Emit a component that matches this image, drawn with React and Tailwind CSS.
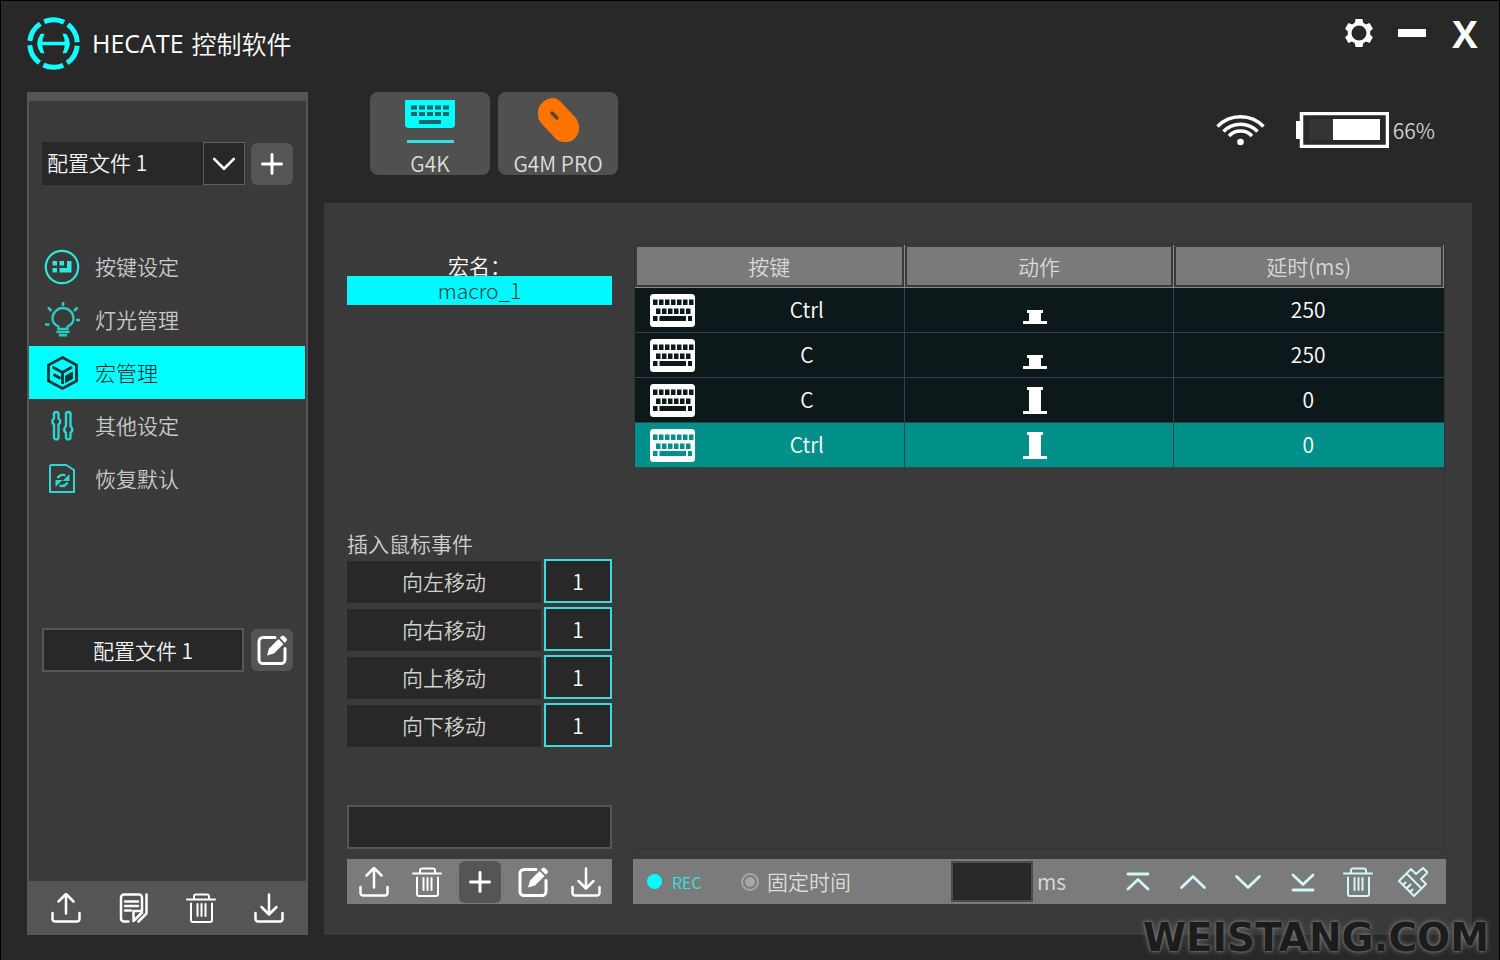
import React, { useState } from 'react';

const Icon = ({ size = 30, width = 2.5, className = '', children }) => (
    <svg
        width={size}
        height={size}
        viewBox="0 0 30 30"
        fill="none"
        stroke="currentColor"
        strokeWidth={width}
        strokeLinecap="round"
        strokeLinejoin="round"
        className={className}
        aria-hidden="true"
    >
        {children}
    </svg>
);

const UploadIcon = () => (
    <Icon>
        <path d="M1.5 20v6a2.5 2.5 0 0 0 2.5 2.5h22a2.5 2.5 0 0 0 2.5-2.5v-6M15 20.5V1.5M7.5 8.5 15 1l7.5 7.5" />
    </Icon>
);

const DownloadIcon = () => (
    <Icon>
        <path d="M1.5 20v6a2.5 2.5 0 0 0 2.5 2.5h22a2.5 2.5 0 0 0 2.5-2.5v-6M15 1.5V21M7.5 14 15 21.5 22.5 14" />
    </Icon>
);

const TrashIcon = () => (
    <Icon width={2}>
        <path d="M1 6.5h28M8 6V3.5A2 2 0 0 1 10 1.5h11a2 2 0 0 1 2 2V6M5 10.5V27a2 2 0 0 0 2 2h17a2 2 0 0 0 2-2V10.5M11.5 11v12M15.5 11v12M19.5 11v12" />
    </Icon>
);

const EditIcon = () => (
    <Icon width={3}>
        <path d="M18 2.5H6A4 4 0 0 0 2 6.5v18a4 4 0 0 0 4 4h18a4 4 0 0 0 4-4V13.5" />
        <path
            d="M10 20.5 12 13.5 21.5 4 26.5 9 17 18.5ZM22.8 2.8 24.5 1a2 2 0 0 1 2.5 0l2.5 2.5a2 2 0 0 1 0 2.5L27.8 7.8Z"
            fill="currentColor"
            stroke="none"
        />
    </Icon>
);

const NoteIcon = () => (
    <Icon width={2.5}>
        <path d="M9.5 28.5H5A3 3 0 0 1 2 25.5V4.5A3 3 0 0 1 5 1.5h15a3 3 0 0 1 3 3V18h-8.500v10L23 19.500M19.500 28.500l8-8V1.500M6 8.500h13M6 13h13M6 17.500h6" />
    </Icon>
);

const PlusIcon = () => (
    <Icon size={22} width={4}>
        <path d="M15 2v26M2 15h26" />
    </Icon>
);

const BroomIcon = () => (
    <Icon width={2}>
        <path d="M8.5 6.5 23.5 21.5M1 14 8.5 6.5 13 2l5 5 7-6 4.5 4.5L23 12l5 5-4.5 4.5L16 29ZM5 18l2.5-2.5M8.5 21.5l4-4M12 25l2.5-2.5" />
    </Icon>
);

const Logo = () => (
    <svg width="53" height="53" viewBox="0 0 53 53" fill="none" stroke="#1ff" aria-hidden="true">
        <circle cx="26.5" cy="26.5" r="23.8" strokeWidth="5" strokeDasharray="20.42 4.5" strokeDashoffset="-2.25" />
        <path d="M13 26.5h27" strokeWidth="3.5" />
        <path
            d="M17.5 16.5Q13 26.5 17.5 36.5L13.5 36Q7 26.5 13.5 17ZM35.5 16.5Q40 26.5 35.5 36.5L39.5 36Q46 26.5 39.5 17Z"
            fill="#1ff"
            stroke="none"
        />
    </svg>
);

const GearIcon = () => (
    <svg width="28" height="30" viewBox="0 0 28 30" aria-hidden="true">
        <path
            fill="white"
            fillRule="evenodd"
            d="M10.5 1h7l.7 3.8 2.8 1.6 3.6-1.3 3.3 5.7-2.7 2.5v3.4l2.7 2.5-3.3 5.7-3.6-1.3-2.8 1.6-.7 3.8h-7l-.7-3.8L7 23.6l-3.6 1.3L.1 19.2l2.7-2.5v-3.4L.1 10.8l3.3-5.7L7 6.4l2.8-1.6ZM14 7.5a7.5 7.5 0 1 0 0 15 7.5 7.5 0 0 0 0-15Z"
        />
    </svg>
);

const WifiIcon = () => (
    <svg width="49" height="32" viewBox="0 0 49 32" fill="none" stroke="white" strokeWidth="3.5" aria-label="wifi">
        <path d="M1.5 12.5a32 32 0 0 1 46 0M7.5 17.5a23.5 23.5 0 0 1 34 0M13 22a16 16 0 0 1 23 0" />
        <circle cx="24.5" cy="28" r="3.3" fill="white" stroke="none" />
    </svg>
);

const BatteryIcon = () => (
    <svg width="93" height="36" viewBox="0 0 93 36" aria-hidden="true">
        <rect x="0" y="9" width="5" height="18" fill="white" />
        <rect x="5.5" y="1.5" width="86" height="33" fill="#282828" stroke="white" strokeWidth="3.5" />
        <rect x="13" y="7" width="24" height="21" fill="#333333" />
        <rect x="37" y="7" width="47" height="21" fill="white" />
    </svg>
);

const DeviceKeyboard = () => (
    <svg width="50" height="43" viewBox="0 0 50 43" aria-hidden="true">
        <path d="M0 0h50v24a4 4 0 0 1-4 4H4a4 4 0 0 1-4-4Z" fill="#0ff" />
        {[6, 14, 22, 30, 38].map((x) => (
            <path key={x} d={`M${x} 5.5h6v4h-6zM${x} 12h6v4h-6z`} fill="#17666a" />
        ))}
        <path d="M14 20h22v4H14Z" fill="#17666a" />
        <path d="M2 40h47v3H2Z" fill="#2ee3e0" />
    </svg>
);

const DeviceMouse = () => (
    <svg width="43" height="44" viewBox="0 0 43 44" aria-hidden="true">
        <path
            d="M7 3q4-3 9-3 4 0 7 3l15 16q5 6 4 13-1 6-6 10-2 2-9 2-5 0-8-3L4 25Q0 20 1 13 2 7 7 3Z"
            fill="#ff7300"
        />
        <path d="m15 15 5 5" stroke="#5a4330" strokeWidth="3.5" strokeLinecap="round" />
    </svg>
);

const KeyboardGlyph = () => (
    <svg width="45" height="33" viewBox="0 0 45 33" className="shrink-0" aria-hidden="true">
        <rect width="45" height="33" rx="3.5" fill="white" />
        <g fill="currentColor">
            {[3, 9, 15, 21, 27, 33, 39].map((x) => (
                <rect key={x} x={x} y="5.5" width="4.5" height="5.5" />
            ))}
            {[6, 12, 18, 24, 30, 36].map((x) => (
                <rect key={x} x={x} y="14.5" width="4.5" height="5.5" />
            ))}
            <rect x="3" y="22" width="4.5" height="5" />
            <rect x="9.5" y="22" width="26.5" height="5" />
            <rect x="38" y="22" width="4" height="5" />
        </g>
    </svg>
);

const KeyState = ({ down }) => (
    <svg width="24" height="27" viewBox="0 0 24 27" fill="white" aria-label={down ? 'down' : 'up'}>
        {down ? (
            <path d="M4 13h16v3h-2v8h6v3H0v-3h6v-8H4Z" />
        ) : (
            <path d="M4 0h16v3h-2v21h6v3H0v-3h6V3H4Z" />
        )}
    </svg>
);

const menu = [
    {
        label: '按键设定',
        icon: (
            <svg width="36" height="36" viewBox="0 0 36 36" fill="none" aria-hidden="true">
                <circle cx="18" cy="18" r="16.2" stroke="#2ee8e0" strokeWidth="2.2" />
                <path d="M8.5 12H13v4.5H8.5ZM15.5 12H20v4.5h-4.5ZM8.5 19H13v4.5H8.5ZM23 12h4.5v11.5h-12V19H23Z" fill="#2ee8e0" />
            </svg>
        ),
    },
    {
        label: '灯光管理',
        icon: (
            <svg width="36" height="36" viewBox="0 0 36 36" fill="none" stroke="#2cc9bf" strokeWidth="2.4" aria-hidden="true">
                <path d="M14.5 27v-2.5C11 23 8.5 20 8.5 16.5a10.5 10.5 0 0 1 21 0c0 3.5-2.5 6.5-6 8V27Z" />
                <path d="M12.5 30h13M15 33.3h8M19 0v4M4 5.5 7.5 9M33.5 5.5 30 9M1 22.5h4.5M32 18h4" strokeWidth="2.6" />
            </svg>
        ),
    },
    {
        label: '宏管理',
        icon: (
            <svg width="36" height="36" viewBox="0 0 36 36" fill="none" stroke="#07363b" strokeWidth="2.8" aria-hidden="true">
                <path d="M18.5 2.5 32.5 10v16L18.5 33.5 4.5 26V10Z" />
                <path d="M8.5 12 18.5 17.5 28 12M18.5 17.5V29M9.5 19.5l7 4" />
                <path d="m21.5 21 7-4v6.5l-7 4Z" fill="#07363b" strokeWidth="1" />
            </svg>
        ),
    },
    {
        label: '其他设定',
        icon: (
            <svg width="36" height="36" viewBox="0 0 36 36" fill="none" stroke="#2ed6cf" strokeWidth="2.4" aria-hidden="true">
                <path d="M10 5q2.500-2 4.500 0v5.500q3.500 3 0 6V30q-2 3-4.500 0V16.500q-3.500-3 0-6ZM22 5q2.500-2 4.500 0v13q3.500 3.500 0 7v5q-2 3-4.500 0v-5q-3.500-3.500 0-7Z" />
            </svg>
        ),
    },
    {
        label: '恢复默认',
        icon: (
            <svg width="36" height="36" viewBox="0 0 36 36" fill="none" stroke="#2ed6cf" strokeWidth="2" aria-hidden="true">
                <path d="M6 5.500A1.500 1.500 0 0 1 7.500 4H22L30 9v22H6Z" />
                <path d="M13.500 17q3-4.500 8-2.500M23.500 21.500q-3 5-8 3" strokeWidth="2.400" />
                <path d="M25.500 13v7H18.500ZM11.500 26v-7h7Z" fill="#2ed6cf" stroke="none" />
            </svg>
        ),
    },
];

const steps = [
    { key: 'Ctrl', down: true, delay: 250 },
    { key: 'C', down: true, delay: 250 },
    { key: 'C', down: false, delay: 0 },
    { key: 'Ctrl', down: false, delay: 0 },
];

const moves = ['向左移动', '向右移动', '向上移动', '向下移动'];

const Sidebar = () => {
    const [active, setActive] = useState('宏管理');

    return (
        <aside className="flex w-[281px] shrink-0 flex-col bg-[#555555]">
            <div className="mx-0.5 mt-[9px] flex flex-1 flex-col bg-[#3a3a3a]">
                <div className="mt-[41px] flex h-[43px] items-end justify-between px-[13px]">
                    <div className="relative h-[43px] w-[203px]">
                        <select
                            aria-label="配置文件"
                            className="h-full w-full appearance-none bg-[#282828] pb-0.5 pl-[5px] text-[#f4f4f4]"
                        >
                            <option>配置文件 1</option>
                        </select>
                        <span className="pointer-events-none absolute inset-y-0 right-0 flex w-[42px] items-center justify-center border border-[#606060]">
                            <Icon size={22} width={3.5} className="text-white">
                                <path d="m1.5 8 13.5 13.5L28.5 8" />
                            </Icon>
                        </span>
                    </div>
                    <button type="button" aria-label="添加配置" className="flex size-[42px] items-center justify-center rounded-md bg-[#555555] text-white">
                        <PlusIcon />
                    </button>
                </div>

                <nav className="mt-[55px] flex flex-col">
                    {menu.map((item) => (
                        <button
                            key={item.label}
                            type="button"
                            onClick={() => setActive(item.label)}
                            className={
                                active === item.label
                                    ? 'mr-px flex h-[53px] items-center gap-[15px] bg-[#00ffff] pl-[15px] font-light text-[#042a2d]'
                                    : 'mr-px flex h-[53px] items-center gap-[15px] pl-[15px] text-[#c8c8c8]'
                            }
                        >
                            {item.icon}
                            {item.label}
                        </button>
                    ))}
                </nav>

                <div className="mt-[123px] flex h-11 items-center justify-between px-[13px]">
                    <input
                        type="text"
                        aria-label="配置文件名称"
                        defaultValue="配置文件 1"
                        className="h-11 w-[202px] border-2 border-[#555555] bg-[#282828] text-center text-[#f4f4f4]"
                    />
                    <button type="button" aria-label="重命名" className="flex size-[42px] items-center justify-center rounded-md bg-[#555555] text-white">
                        <EditIcon />
                    </button>
                </div>
            </div>

            <div className="flex h-[54px] items-center justify-between px-6 text-white">
                <button type="button" aria-label="导出"><UploadIcon /></button>
                <button type="button" aria-label="复制"><NoteIcon /></button>
                <button type="button" aria-label="删除"><TrashIcon /></button>
                <button type="button" aria-label="导入"><DownloadIcon /></button>
            </div>
        </aside>
    );
};

const MacroColumn = () => (
    <div className="flex w-[265px] shrink-0 flex-col">
        <h2 className="mt-[11px] text-center leading-[21px] text-white">宏名：</h2>
        <button type="button" className="h-[29px] bg-[#00f8ff] leading-[29px] font-light text-[#063a40]">macro_1</button>

        <h2 className="mt-[227px] mb-1 leading-[23px] text-[#d0d0d0]">插入鼠标事件</h2>
        <div className="flex flex-col gap-1">
            {moves.map((move) => (
                <div key={move} className="flex items-end gap-[3px]">
                    <button type="button" className="h-[42px] flex-1 bg-[#282828] text-[#d0d0d0]">{move}</button>
                    <input
                        type="text"
                        aria-label={move}
                        defaultValue="1"
                        className="h-11 w-[68px] border-2 border-[#3adcdc] bg-[#282828] text-center text-white"
                    />
                </div>
            ))}
        </div>

        <input type="text" aria-label="宏名称" className="mt-auto h-11 border-2 border-[#555555] bg-[#282828] px-2 text-white" />
        <div className="mt-2.5 grid h-[45px] grid-cols-5 bg-[#7b7b7b] text-white">
            <button type="button" aria-label="导出宏" className="flex items-center justify-center"><UploadIcon /></button>
            <button type="button" aria-label="删除宏" className="flex items-center justify-center"><TrashIcon /></button>
            <button type="button" aria-label="新建宏" className="m-auto flex size-[42px] items-center justify-center rounded-md bg-[#555555]"><PlusIcon /></button>
            <button type="button" aria-label="重命名宏" className="flex items-center justify-center"><EditIcon /></button>
            <button type="button" aria-label="导入宏" className="flex items-center justify-center"><DownloadIcon /></button>
        </div>
    </div>
);

const StepTable = () => {
    const [selected, setSelected] = useState(3);

    return (
        <table className="w-full table-fixed border-separate border-spacing-0">
            <thead>
                <tr className="text-[#d8d8d8]">
                    {['按键', '动作', '延时(ms)'].map((title) => (
                        <th key={title} className="w-1/3 border-r border-b border-[#8a8a8a] p-0.5 font-[350]">
                            <div className="h-[38px] bg-[#7a7a7a] leading-[38px]">{title}</div>
                        </th>
                    ))}
                </tr>
            </thead>
            <tbody>
                {steps.map((step, index) => (
                    <tr
                        key={index}
                        onClick={() => setSelected(index)}
                        className={
                            index === selected
                                ? 'h-[45px] bg-[#00908a] text-[#00908a]'
                                : 'h-[45px] bg-[#0d181a] text-[#0d181a]'
                        }
                    >
                        <td className="border-r border-b border-[#344245] p-0">
                            <div className="flex items-center gap-[15px] pl-[15px]">
                                <KeyboardGlyph />
                                <span className="flex-1 text-center text-white">{step.key}</span>
                            </div>
                        </td>
                        <td className="border-r border-b border-[#344245] p-0">
                            <div className="flex justify-center pr-2">
                                <KeyState down={step.down} />
                            </div>
                        </td>
                        <td className="border-b border-[#344245] p-0 pr-0.5 text-center text-white">{step.delay}</td>
                    </tr>
                ))}
            </tbody>
        </table>
    );
};

const RecordBar = () => (
    <div className="mt-2.5 flex h-[45px] items-center bg-[#7b7b7b] pr-1.5 pl-3.5 text-[#dcdcdc]">
        <button type="button" className="flex w-[94px] items-center gap-2.5 text-base text-[#2ee8e0]">
            <span className="size-[15px] rounded-full bg-[#00ffff]"></span>
            REC
        </button>
        <label className="flex items-center gap-2">
            <input
                type="radio"
                name="delay"
                className="size-[18px] appearance-none rounded-full border-2 border-[#a6a6a6] bg-[#a6a6a6] bg-clip-content p-[2px]"
            />
            固定时间
        </label>
        <label className="ml-auto flex items-center gap-1">
            <input type="text" className="h-[41px] w-[82px] border-2 border-[#4c4c4c] bg-[#282828] px-1 text-center text-white" />
            ms
        </label>
        <div className="ml-11 flex text-[#d2f6fa]">
            <button type="button" aria-label="移到顶部" className="flex w-[55px] justify-center">
                <Icon width={2.8}><path d="M5 7h20M5 22 15 12.5 25 22" /></Icon>
            </button>
            <button type="button" aria-label="上移" className="flex w-[55px] justify-center">
                <Icon width={2.8}><path d="M3.5 20.5 15 9.5l11.5 11" /></Icon>
            </button>
            <button type="button" aria-label="下移" className="flex w-[55px] justify-center">
                <Icon width={2.8}><path d="m3.5 9.5 11.5 11 11.5-11" /></Icon>
            </button>
            <button type="button" aria-label="移到底部" className="flex w-[55px] justify-center">
                <Icon width={2.8}><path d="M5 23h20M5 8l10 9.5L25 8" /></Icon>
            </button>
            <button type="button" aria-label="删除步骤" className="flex w-[55px] justify-center"><TrashIcon /></button>
            <button type="button" aria-label="清空" className="flex w-[55px] justify-center"><BroomIcon /></button>
        </div>
    </div>
);

const App = () => {
    return (
        <div
            lang="zh-CN"
            className="relative flex min-h-screen flex-col overflow-hidden border-x border-t border-black bg-[#282828] font-['Noto_Sans_CJK_SC',sans-serif] text-[21px] font-[350]"
        >
            <header className="flex h-[91px] shrink-0 items-start justify-between pr-5 pl-[26px]">
                <div className="flex items-center gap-3 pt-4">
                    <Logo />
                    <h1 className="flex gap-2 text-[25px] text-white">
                        <span className="font-['Open_Sans',sans-serif] font-normal">HECATE</span>
                        <span>控制软件</span>
                    </h1>
                </div>
                <div className="flex items-center gap-[25px] pt-[17px]">
                    <button type="button" aria-label="设置"><GearIcon /></button>
                    <button type="button" aria-label="最小化" className="h-2 w-7 bg-white"></button>
                    <button type="button" aria-label="关闭" className="w-7 text-center font-['Open_Sans',sans-serif] text-[38px] leading-[30px] font-bold text-white">X</button>
                </div>
            </header>

            <div className="flex flex-1 gap-4 pr-[27px] pb-[25px] pl-[26px]">
                <Sidebar />

                <div className="flex flex-1 flex-col">
                    <div className="flex h-[111px] items-start justify-between pr-[37px] pl-[46px]">
                        <div className="flex gap-2 text-[#dcdcdc]">
                            <button type="button" className="flex h-[83px] w-[120px] flex-col items-center justify-between rounded-lg bg-[#505050] pt-2">
                                <DeviceKeyboard />
                                <span className="leading-6">G4K</span>
                            </button>
                            <button type="button" className="flex h-[83px] w-[120px] flex-col items-center justify-between rounded-lg bg-[#505050] pt-1.5">
                                <DeviceMouse />
                                <span className="leading-6">G4M PRO</span>
                            </button>
                        </div>
                        <div className="flex items-center pt-5 text-[#d0d0d0]">
                            <WifiIcon />
                            <span className="ml-[31px] flex items-center gap-1 leading-9">
                                <BatteryIcon />
                                66%
                            </span>
                        </div>
                    </div>

                    <main className="flex flex-1 gap-[21px] bg-[#3a3a3a] pt-[41px] pr-[26px] pb-[31px] pl-[23px]">
                        <MacroColumn />
                        <div className="flex flex-1 flex-col">
                            <div className="mx-px flex-1 border border-[#333333]">
                                <StepTable />
                            </div>
                            <RecordBar />
                        </div>
                    </main>
                </div>
            </div>

            <div className="pointer-events-none absolute right-2.5 bottom-1 font-['DejaVu_Sans',sans-serif] text-[39px] leading-9 font-bold text-[#1c1c1c] [text-shadow:0_0_3px_#8a8a8a,0_0_6px_#6a6a6a]">
                WEISTANG.COM
            </div>
        </div>
    );
};

export default App;
